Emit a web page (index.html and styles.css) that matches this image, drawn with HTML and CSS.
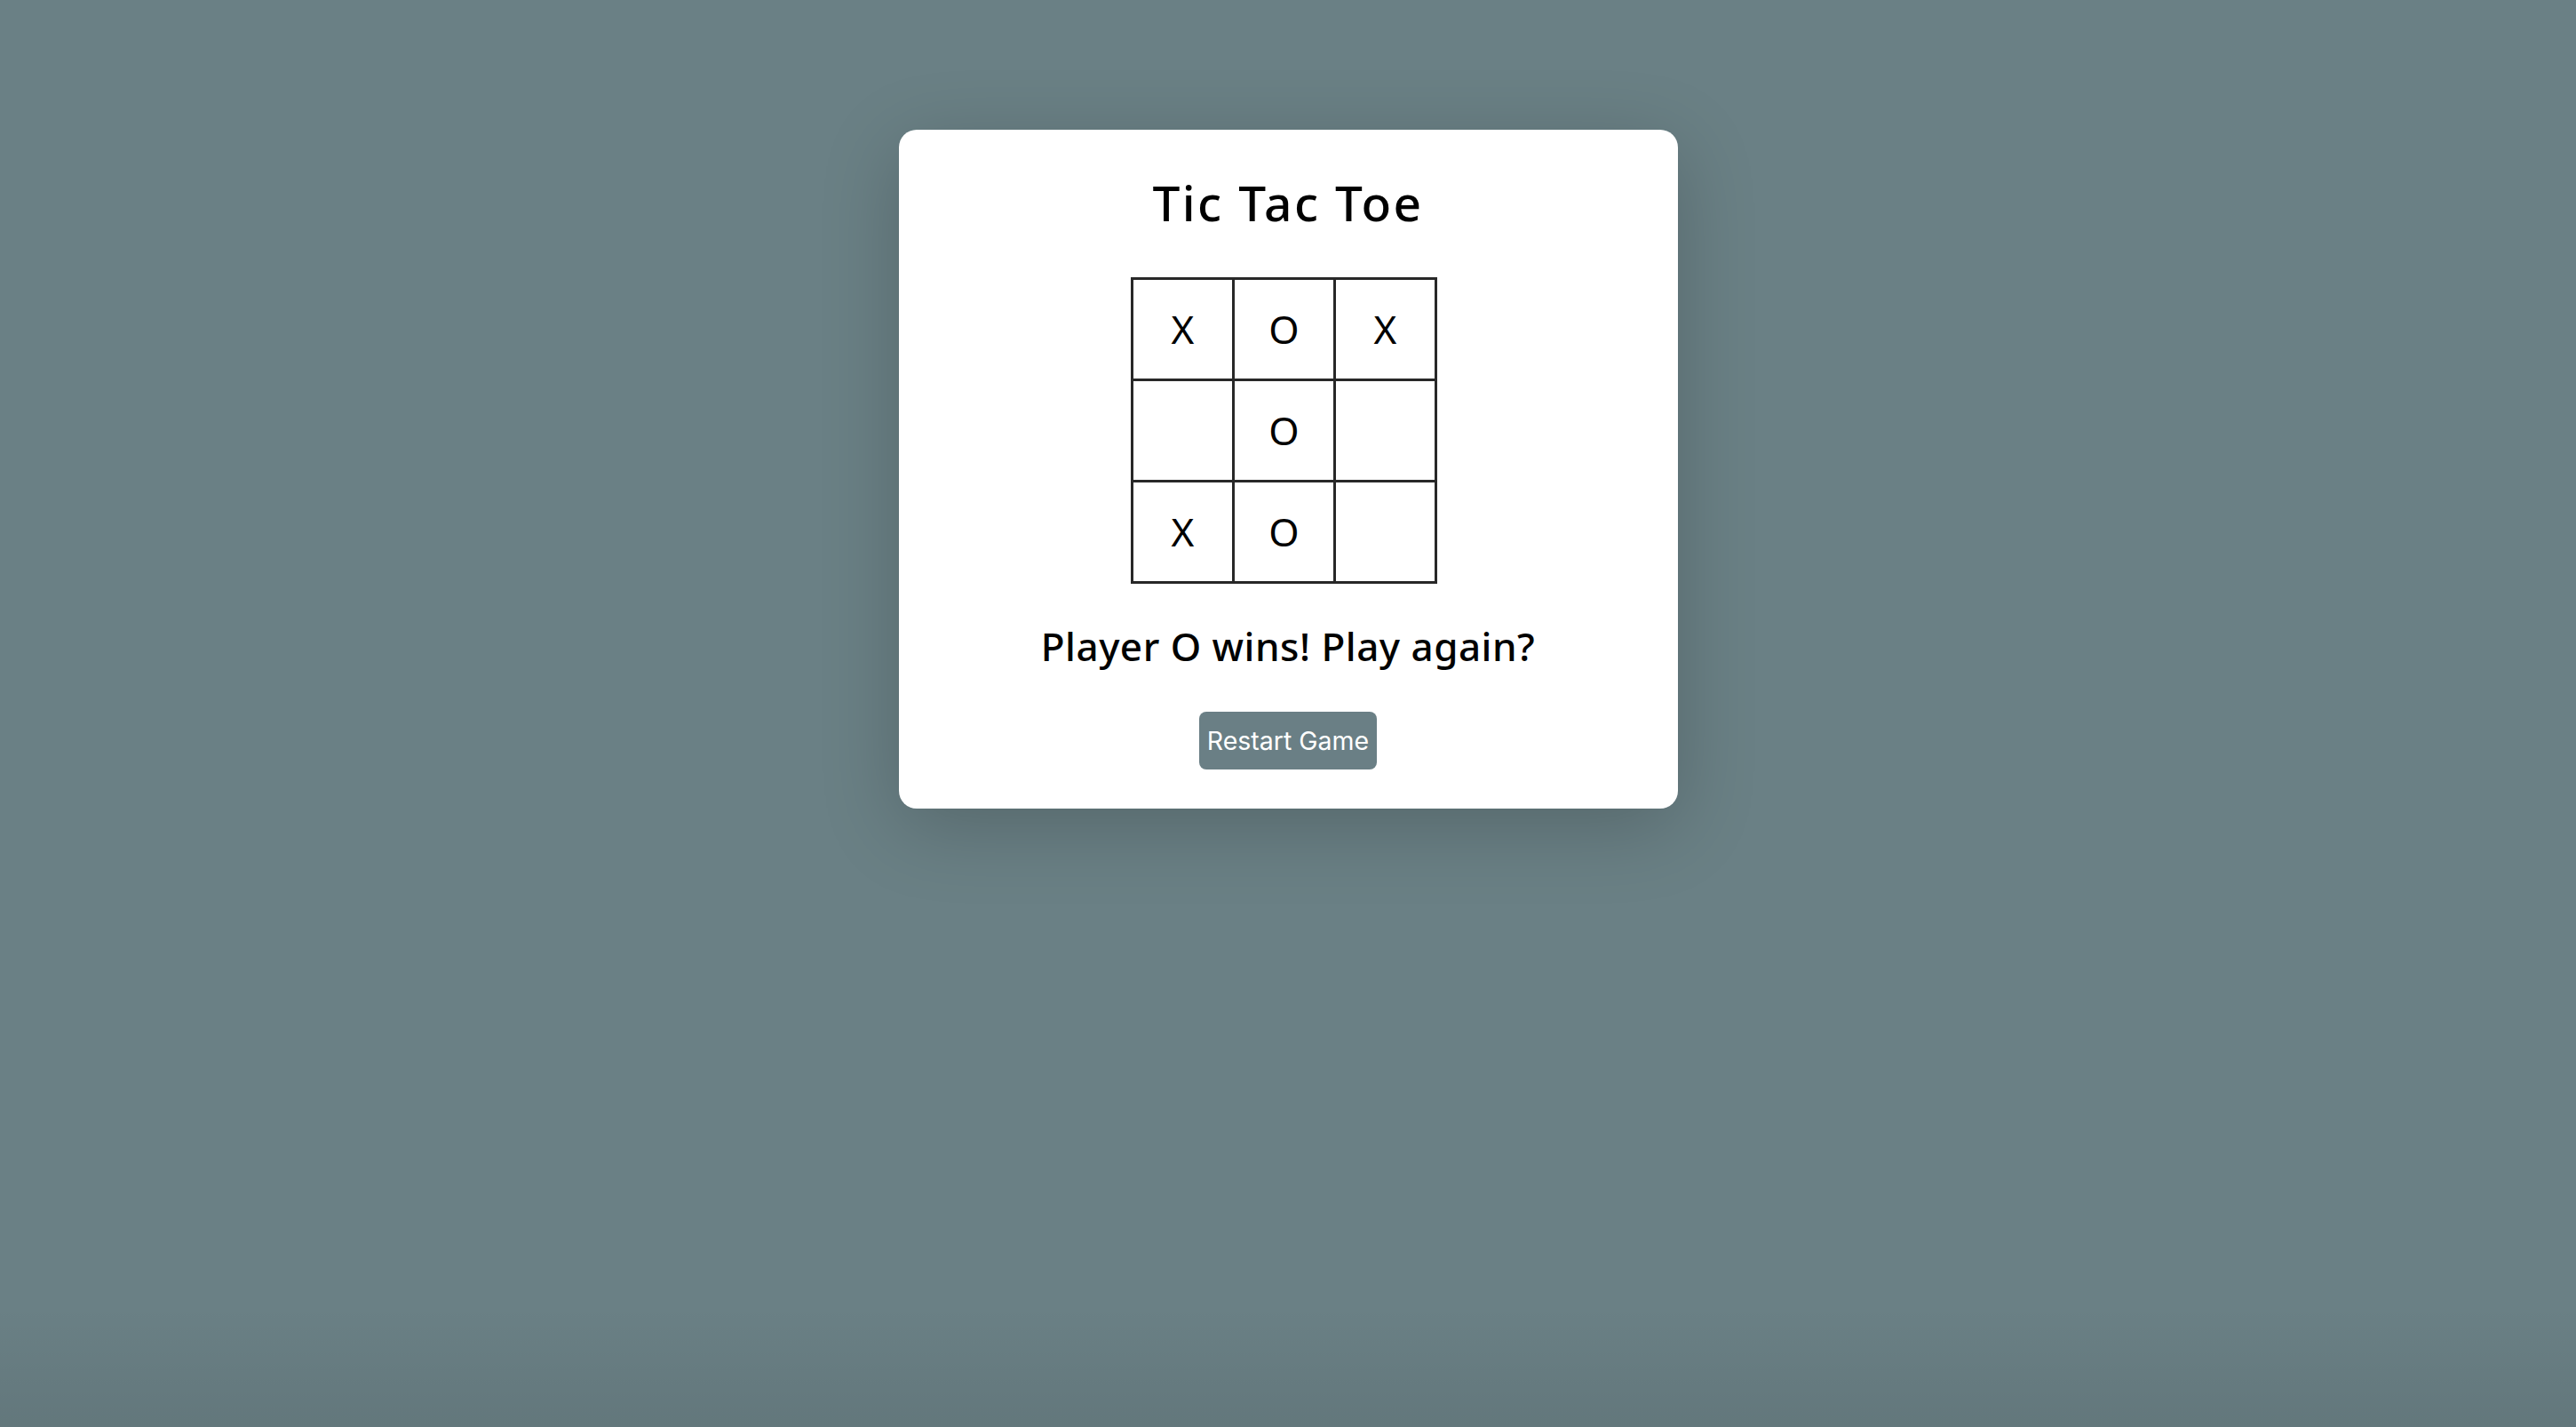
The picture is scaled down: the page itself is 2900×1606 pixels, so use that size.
FILE: index.html
```html
<!DOCTYPE html>
<html lang="en">
<head>
<meta charset="utf-8">
<title>Tic Tac Toe</title>
<link rel="stylesheet" href="styles.css">
</head>
<body>
<main class="card">
  <h1 class="title">Tic Tac Toe</h1>
  <div class="board">
    <div class="cell">X</div>
    <div class="cell">O</div>
    <div class="cell">X</div>
    <div class="cell"></div>
    <div class="cell">O</div>
    <div class="cell"></div>
    <div class="cell">X</div>
    <div class="cell">O</div>
    <div class="cell"></div>
  </div>
  <p class="status">Player O wins! Play again?</p>
  <button class="restart" type="button">Restart Game</button>
</main>
</body>
</html>
```

FILE: styles.css
```css
html, body {
  margin: 0;
  padding: 0;
}

body {
  min-height: 1606px;
  background-color: #6a8085;
  background-image: linear-gradient(to bottom, rgba(0,0,0,0) 1470px, rgba(0,0,0,0.07) 1606px);
  font-family: "Noto Sans", "DejaVu Sans", sans-serif;
  color: #000;
}

.card {
  box-sizing: border-box;
  width: 877px;
  margin: 146px auto 0;
  padding: 54px 0 44px;
  background: #fff;
  border-radius: 20px;
  box-shadow: 0 20px 90px rgba(0, 0, 0, 0.2);
  display: flex;
  flex-direction: column;
  align-items: center;
}

.title {
  margin: 0;
  font-size: 55px;
  font-weight: 500;
  line-height: 55px;
  letter-spacing: 2.4px;
}

.board {
  margin: 57px 9px 0 0;
  display: grid;
  grid-template-columns: repeat(3, 111px);
  grid-template-rows: repeat(3, 111px);
  gap: 3px;
  border: 3px solid #282828;
  background: #282828;
}

.cell {
  background: #fff;
  display: flex;
  align-items: center;
  justify-content: center;
  padding-bottom: 2px;
  font-size: 44px;
  line-height: 1;
  font-weight: 400;
}

.status {
  margin: 48px 0 0;
  font-size: 44px;
  line-height: 44px;
  font-weight: 500;
  letter-spacing: 0.5px;
}

.restart {
  margin-top: 52px;
  padding: 18px 9px;
  border: none;
  border-radius: 8px;
  background: #6a7f85;
  color: #fff;
  font-family: Inter, "Liberation Sans", sans-serif;
  font-size: 28.5px;
  line-height: 29px;
  cursor: pointer;
}
```
